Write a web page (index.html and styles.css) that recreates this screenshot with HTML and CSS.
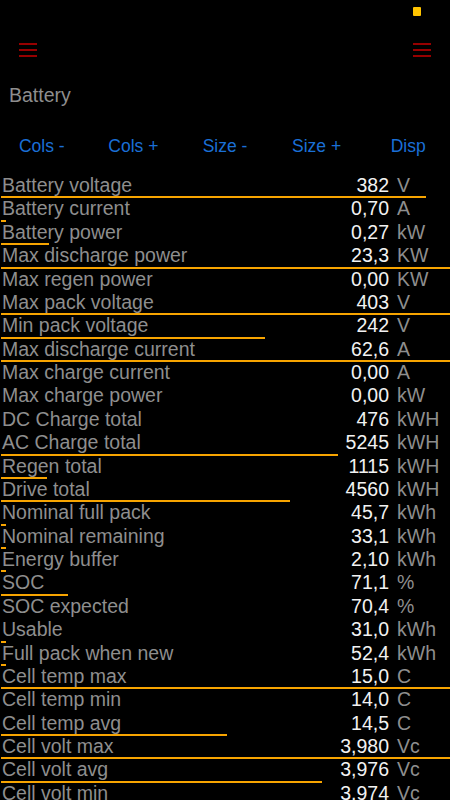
FILE: index.html
```html
<!DOCTYPE html>
<html>
<head>
<meta charset="utf-8">
<link rel="stylesheet" href="styles.css">
</head>
<body>
<div class="status"><span class="dot"></span></div>
<div class="nav">
  <svg class="burger" width="18" height="14" viewBox="0 0 18 14"><path d="M0 1h18M0 7h18M0 13h18" stroke="#c80000" stroke-width="1.5"/></svg>
  <svg class="burger" width="18" height="14" viewBox="0 0 18 14"><path d="M0 1h18M0 7h18M0 13h18" stroke="#c80000" stroke-width="1.5"/></svg>
</div>
<div class="title">Battery</div>
<div class="buttons">
  <span>Cols -</span><span>Cols +</span><span>Size -</span><span>Size +</span><span>Disp</span>
</div>
<div class="list">
  <div class="row"><div class="line"><span class="label">Battery voltage</span><span class="val">382</span><span class="unit">V</span></div><div class="bar" style="width:425px"></div></div>
  <div class="row"><div class="line"><span class="label">Battery current</span><span class="val">0,70</span><span class="unit">A</span></div><div class="bar" style="width:5px"></div></div>
  <div class="row"><div class="line"><span class="label">Battery power</span><span class="val">0,27</span><span class="unit">kW</span></div><div class="bar" style="width:48px"></div></div>
  <div class="row"><div class="line"><span class="label">Max discharge power</span><span class="val">23,3</span><span class="unit">KW</span></div><div class="bar" style="width:449px"></div></div>
  <div class="row"><div class="line"><span class="label">Max regen power</span><span class="val">0,00</span><span class="unit">KW</span></div><div class="bar" style="width:0px"></div></div>
  <div class="row"><div class="line"><span class="label">Max pack voltage</span><span class="val">403</span><span class="unit">V</span></div><div class="bar" style="width:449px"></div></div>
  <div class="row"><div class="line"><span class="label">Min pack voltage</span><span class="val">242</span><span class="unit">V</span></div><div class="bar" style="width:264px"></div></div>
  <div class="row"><div class="line"><span class="label">Max discharge current</span><span class="val">62,6</span><span class="unit">A</span></div><div class="bar" style="width:449px"></div></div>
  <div class="row"><div class="line"><span class="label">Max charge current</span><span class="val">0,00</span><span class="unit">A</span></div><div class="bar" style="width:0px"></div></div>
  <div class="row"><div class="line"><span class="label">Max charge power</span><span class="val">0,00</span><span class="unit">kW</span></div><div class="bar" style="width:0px"></div></div>
  <div class="row"><div class="line"><span class="label">DC Charge total</span><span class="val">476</span><span class="unit">kWH</span></div><div class="bar" style="width:0px"></div></div>
  <div class="row"><div class="line"><span class="label">AC Charge total</span><span class="val">5245</span><span class="unit">kWH</span></div><div class="bar" style="width:337px"></div></div>
  <div class="row"><div class="line"><span class="label">Regen total</span><span class="val">1115</span><span class="unit">kWH</span></div><div class="bar" style="width:46px"></div></div>
  <div class="row"><div class="line"><span class="label">Drive total</span><span class="val">4560</span><span class="unit">kWH</span></div><div class="bar" style="width:289px"></div></div>
  <div class="row"><div class="line"><span class="label">Nominal full pack</span><span class="val">45,7</span><span class="unit">kWh</span></div><div class="bar" style="width:5px"></div></div>
  <div class="row"><div class="line"><span class="label">Nominal remaining</span><span class="val">33,1</span><span class="unit">kWh</span></div><div class="bar" style="width:5px"></div></div>
  <div class="row"><div class="line"><span class="label">Energy buffer</span><span class="val">2,10</span><span class="unit">kWh</span></div><div class="bar" style="width:5px"></div></div>
  <div class="row"><div class="line"><span class="label">SOC</span><span class="val">71,1</span><span class="unit">%</span></div><div class="bar" style="width:67px"></div></div>
  <div class="row"><div class="line"><span class="label">SOC expected</span><span class="val">70,4</span><span class="unit">%</span></div><div class="bar" style="width:0px"></div></div>
  <div class="row"><div class="line"><span class="label">Usable</span><span class="val">31,0</span><span class="unit">kWh</span></div><div class="bar" style="width:5px"></div></div>
  <div class="row"><div class="line"><span class="label">Full pack when new</span><span class="val">52,4</span><span class="unit">kWh</span></div><div class="bar" style="width:5px"></div></div>
  <div class="row"><div class="line"><span class="label">Cell temp max</span><span class="val">15,0</span><span class="unit">C</span></div><div class="bar" style="width:449px"></div></div>
  <div class="row"><div class="line"><span class="label">Cell temp min</span><span class="val">14,0</span><span class="unit">C</span></div><div class="bar" style="width:0px"></div></div>
  <div class="row"><div class="line"><span class="label">Cell temp avg</span><span class="val">14,5</span><span class="unit">C</span></div><div class="bar" style="width:226px"></div></div>
  <div class="row"><div class="line"><span class="label">Cell volt max</span><span class="val">3,980</span><span class="unit">Vc</span></div><div class="bar" style="width:449px"></div></div>
  <div class="row"><div class="line"><span class="label">Cell volt avg</span><span class="val">3,976</span><span class="unit">Vc</span></div><div class="bar" style="width:321px"></div></div>
  <div class="row"><div class="line"><span class="label">Cell volt min</span><span class="val">3,974</span><span class="unit">Vc</span></div><div class="bar" style="width:0px"></div></div>
</div>
</body>
</html>
```
FILE: styles.css
```css
html, body {
  margin: 0;
  padding: 0;
  background: #000;
  height: 800px;
  overflow: hidden;
}
body {
  font-family: "Liberation Sans", Arial, sans-serif;
}
.status {
  height: 24px;
  display: flex;
  justify-content: flex-end;
  padding-right: 29px;
  box-sizing: border-box;
}
.dot {
  display: block;
  width: 8px;
  height: 9px;
  margin-top: 7px;
  background: #ffc400;
  border-radius: 1px;
}
.nav {
  height: 52px;
  display: flex;
  align-items: center;
  justify-content: space-between;
  padding: 0 19px 0 19px;
  box-sizing: border-box;
}
.burger {
  display: block;
}
.title {
  margin-top: 9px;
  padding-left: 9px;
  font-size: 19.5px;
  line-height: 21px;
  color: #8e8e8e;
}
.buttons {
  margin: 30px -4px 0 -4px;
  display: grid;
  grid-template-columns: repeat(5, 1fr);
  font-size: 17.5px;
  line-height: 20px;
  color: #1a6fd6;
  text-align: center;
}
.list {
  margin-top: 19px;
}
.row {
  height: 23.38px;
}
.line {
  display: flex;
  height: 21.38px;
  line-height: 21.38px;
  font-size: 19.5px;
  padding-left: 2px;
  white-space: nowrap;
}
.label {
  flex: 1;
  color: #8e8e8e;
}
.val {
  color: #f2f2f2;
  text-align: right;
}
.unit {
  width: 53px;
  padding-left: 8px;
  color: #8e8e8e;
}
.bar {
  height: 2px;
  margin-left: 1px;
  background: #f7a400;
}
```
